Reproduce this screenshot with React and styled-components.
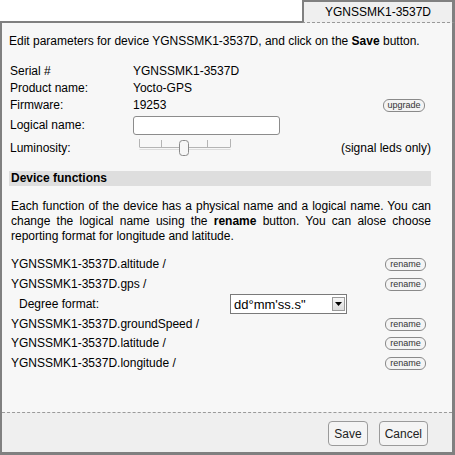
import React from "react"
import styled, { createGlobalStyle } from "styled-components"

const Global = createGlobalStyle`
  html, body {
    margin: 0;
    padding: 0;
    background: #ffffff;
  }
  body {
    font-family: "Liberation Sans", Arial, sans-serif;
    font-size: 12px;
    color: #000;
  }
`

const Window = styled.div`
  width: 455px;
  height: 455px;
  display: flex;
  flex-direction: column;
  box-sizing: border-box;
`

const TabRow = styled.div`
  display: flex;
  height: 23px;
  flex-shrink: 0;

  .filler {
    flex: 1;
    border-bottom: 2px solid #808080;
  }
`

const Tab = styled.div`
  width: 153px;
  box-sizing: border-box;
  border: 2px solid #808080;
  border-right-width: 3px;
  border-bottom: 1px dashed #9a9a9a;
  background: #efefef;
  display: flex;
  align-items: center;
  justify-content: center;
  font-size: 12px;
  padding-bottom: 1px;
`

const Panel = styled.div`
  flex: 1;
  display: flex;
  flex-direction: column;
  border-left: 2px solid #808080;
  border-right: 3px solid #808080;
  border-bottom: 3px solid #808080;
  background: #f7f7f7;
`

const Body = styled.div`
  flex: 1;
  padding: 11px 21px 0 7px;
  line-height: 15px;

  b {
    font-weight: bold;
  }
`

const Intro = styled.div`
  margin-bottom: 14px;
`

const InfoGrid = styled.div`
  display: grid;
  grid-template-columns: 123px 1fr auto;
  align-items: center;
  padding-left: 1px;
`

const Cell = styled.div`
  height: ${(p) => p.$h || 17}px;
  display: flex;
  align-items: center;
  justify-content: ${(p) => (p.$right ? "flex-end" : "flex-start")};
`

const TextInput = styled.div`
  width: 147px;
  height: 19px;
  box-sizing: border-box;
  background: #fff;
  border: 1px solid #8c8c8c;
  border-radius: 3px;
`

const SliderBox = styled.div`
  margin-left: 5px;
  display: flex;
`

const Pill = styled.button`
  font-family: "Liberation Sans", Arial, sans-serif;
  font-size: 9px;
  color: #333;
  height: 13px;
  width: ${(p) => p.$w || 41}px;
  padding: 0;
  line-height: 11px;
  background: #f4f4f4;
  border: 1px solid #8a8a8a;
  border-radius: 6px;
  margin-right: ${(p) => p.$mr || 0}px;
`

const SectionBar = styled.div`
  margin-top: 12px;
  background: #dedede;
  font-weight: bold;
  height: 15px;
  line-height: 15px;
  padding-left: 2px;
`

const Paragraph = styled.p`
  margin: 13px 0 11px;
  padding-left: 2px;
  text-align: justify;
  line-height: 15px;
`

const FuncRow = styled.div`
  display: flex;
  align-items: center;
  justify-content: space-between;
  height: ${(p) => p.$h || 19.5}px;
  padding-left: ${(p) => (p.$indent ? 10 : 2)}px;
  padding-right: 5px;
`

const DegreeLabel = styled.span`
  width: 211px;
`

const Select = styled.div`
  width: 117px;
  height: 20px;
  box-sizing: border-box;
  background: #fff;
  border: 1px solid #7a7a7a;
  display: flex;
  align-items: center;
  justify-content: space-between;
  padding: 0 1px 0 3px;
  font-size: 13px;
  margin-right: auto;
`

const SelectArrow = styled.span`
  width: 13px;
  height: 14px;
  box-sizing: border-box;
  border: 1px solid #9a9a9a;
  background: linear-gradient(#f6f6f6, #dcdcdc);
  display: flex;
  align-items: center;
  justify-content: center;
`

const Footer = styled.div`
  flex-shrink: 0;
  height: 40px;
  box-sizing: border-box;
  border-top: 1px dashed #9a9a9a;
  background: #efefef;
  display: flex;
  justify-content: flex-end;
  align-items: flex-start;
  gap: 11px;
  padding: 8px 24px 0 0;
`

const Button = styled.button`
  font-family: "Liberation Sans", Arial, sans-serif;
  font-size: 12px;
  color: #222;
  height: 25px;
  padding: 0 5px;
  background: #f4f4f4;
  border: 1px solid #9a9a9a;
  border-radius: 4px;
`

const Slider = () => (
  <SliderBox>
    <svg width="96" height="22" viewBox="0 0 96 22">
      <g stroke="#b4b4b4" strokeWidth="1" fill="none">
        <path d="M1.5 2v8M23.5 3v7M46.5 3v7M69.5 3v7M92.5 2v8" />
        <path d="M1.5 10.5h91" />
        <path d="M1.5 12.5h91" stroke="#dcdcdc" />
      </g>
      <rect x="41.5" y="3.5" width="9" height="15" rx="3" fill="#f6f6f6" stroke="#8a8a8a" />
    </svg>
  </SliderBox>
)

const functions = ["altitude", "gps", "groundSpeed", "latitude", "longitude"]

const FunctionLine = ({ name }) => (
  <FuncRow>
    <span>YGNSSMK1-3537D.{name} /</span>
    <Pill>rename</Pill>
  </FuncRow>
)

const App = () => (
  <>
    <Global />
    <Window>
      <TabRow>
        <div className="filler" />
        <Tab>YGNSSMK1-3537D</Tab>
      </TabRow>
      <Panel>
        <Body>
          <Intro>
            Edit parameters for device YGNSSMK1-3537D, and click on the <b>Save</b> button.
          </Intro>
          <InfoGrid>
            <Cell>Serial #</Cell>
            <Cell>YGNSSMK1-3537D</Cell>
            <Cell />
            <Cell>Product name:</Cell>
            <Cell>Yocto-GPS</Cell>
            <Cell />
            <Cell>Firmware:</Cell>
            <Cell>19253</Cell>
            <Cell $right>
              <Pill $w={42} $mr={6}>upgrade</Pill>
            </Cell>
            <Cell $h={23}>Logical name:</Cell>
            <Cell $h={23}>
              <TextInput />
            </Cell>
            <Cell $h={23} />
            <Cell $h={22}>Luminosity:</Cell>
            <Cell $h={22}>
              <Slider />
            </Cell>
            <Cell $h={22} $right>(signal leds only)</Cell>
          </InfoGrid>
          <SectionBar>Device functions</SectionBar>
          <Paragraph>
            Each function of the device has a physical name and a logical name. You can
            change the logical name using the <b>rename</b> button. You can alose choose
            reporting format for longitude and latitude.
          </Paragraph>
          <FunctionLine name={functions[0]} />
          <FunctionLine name={functions[1]} />
          <FuncRow $indent $h={20.5}>
            <DegreeLabel>Degree format:</DegreeLabel>
            <Select>
              <span>dd°mm&apos;ss.s&quot;</span>
              <SelectArrow>
                <svg width="7" height="4" viewBox="0 0 7 4">
                  <path d="M0 0h7L3.5 4z" fill="#000" />
                </svg>
              </SelectArrow>
            </Select>
          </FuncRow>
          {functions.slice(2).map((f) => (
            <FunctionLine key={f} name={f} />
          ))}
        </Body>
        <Footer>
          <Button>Save</Button>
          <Button>Cancel</Button>
        </Footer>
      </Panel>
    </Window>
  </>
)

export default App
